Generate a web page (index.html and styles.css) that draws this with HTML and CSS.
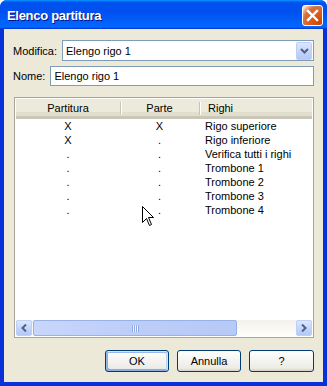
FILE: index.html
```html
<!DOCTYPE html>
<html>
<head>
<meta charset="utf-8">
<link rel="stylesheet" href="styles.css">
</head>
<body>
<div class="window">
  <div class="titlebar">
    <span class="title">Elenco partitura</span>
    <span class="close">
      <svg width="13" height="13" viewBox="0 0 13 13"><path d="M2 2 L11 11 M11 2 L2 11" stroke="#fff" stroke-width="2.4" stroke-linecap="square"/></svg>
    </span>
  </div>
  <div class="client">
    <div class="field">
      <span class="lbl">Modifica:</span>
      <div class="combo">
        <span class="val">Elengo rigo 1</span>
        <span class="dd"><svg width="9" height="6" viewBox="0 0 9 6"><path d="M1 1 L4.5 4.5 L8 1" fill="none" stroke="#4d6185" stroke-width="2"/></svg></span>
      </div>
    </div>
    <div class="field f2">
      <span class="lbl">Nome:</span>
      <div class="textbox">Elengo rigo 1</div>
    </div>
    <div class="list">
      <div class="header">
        <div class="hc c1">Partitura</div>
        <div class="hc c2"><span class="sep"></span>Parte</div>
        <div class="hc c3"><span class="sep"></span>Righi</div>
      </div>
      <div class="rows">
        <div class="row"><span class="c1">X</span><span class="c2">X</span><span class="c3">Rigo superiore</span></div>
        <div class="row"><span class="c1">X</span><span class="c2">.</span><span class="c3">Rigo inferiore</span></div>
        <div class="row"><span class="c1">.</span><span class="c2">.</span><span class="c3">Verifica tutti i righi</span></div>
        <div class="row"><span class="c1">.</span><span class="c2">.</span><span class="c3">Trombone 1</span></div>
        <div class="row"><span class="c1">.</span><span class="c2">.</span><span class="c3">Trombone 2</span></div>
        <div class="row"><span class="c1">.</span><span class="c2">.</span><span class="c3">Trombone 3</span></div>
        <div class="row"><span class="c1">.</span><span class="c2">.</span><span class="c3">Trombone 4</span></div>
      </div>
      <div class="hscroll">
        <span class="sbtn"><svg width="6" height="8" viewBox="0 0 6 8"><path d="M5 0.5 L1.5 4 L5 7.5" fill="none" stroke="#4d6185" stroke-width="2"/></svg></span>
        <div class="track">
          <div class="thumb"><span class="grip"></span></div>
        </div>
        <span class="sbtn"><svg width="6" height="8" viewBox="0 0 6 8"><path d="M1 0.5 L4.5 4 L1 7.5" fill="none" stroke="#4d6185" stroke-width="2"/></svg></span>
      </div>
    </div>
    <div class="buttons">
      <button class="btn default">OK</button>
      <button class="btn">Annulla</button>
      <button class="btn wide">?</button>
    </div>
  </div>
  <svg class="cursor" width="13" height="21" viewBox="0 0 13 21"><path d="M0.5 0.5 L0.5 16.5 L4.5 12.5 L7.5 19.5 L9.5 18.5 L6.5 11.5 L11.5 11.5 Z" fill="#fff" stroke="#000" stroke-width="1"/></svg>
</div>
</body>
</html>
```

FILE: styles.css
```css
html, body {
  margin: 0;
  padding: 0;
  background: #fff;
}
.window {
  position: relative;
  width: 327px;
  height: 386px;
  display: flex;
  flex-direction: column;
  font-family: "Liberation Sans", Arial, sans-serif;
  font-size: 11px;
  color: #000;
  border-radius: 7px 7px 0 0;
  overflow: hidden;
  background: #0831d9;
}
.titlebar {
  height: 29px;
  flex: none;
  display: flex;
  align-items: center;
  justify-content: space-between;
  padding: 0 4px 0 7px;
  background: linear-gradient(180deg, #0997ff, #0053ee 8%, #0050ee 40%, #0066ff 88%, #0066ff 93%, #005bff 95%, #003dd7 96%, #003dd7);
}
.title {
  color: #fff;
  font-weight: bold;
  font-size: 13px;
  letter-spacing: -0.3px;
  text-shadow: 1px 1px #0f1089;
  margin-top: 1px;
}
.close {
  width: 19px;
  height: 19px;
  border: 1px solid #fff;
  border-radius: 3px;
  display: flex;
  align-items: center;
  justify-content: center;
  background: radial-gradient(circle at 90% 90%, #cc4600 0, #dc6527 55%, #cd7546 70%, #ffccb2 90%, #fff 100%);
  margin-top: 2px;
}
.client {
  flex: 1;
  margin: 0 4px 4px 4px;
  background: #ece9d8;
  padding: 11px 9px 10px 9px;
  display: flex;
  flex-direction: column;
}
.field {
  display: flex;
  align-items: center;
  gap: 5px;
  height: 21px;
}
.field.f2 {
  margin-top: 5px;
  height: 20px;
}
.lbl {
  flex: none;
}
.combo {
  flex: 1;
  height: 21px;
  box-sizing: border-box;
  border: 1px solid #7f9db9;
  background: #fff;
  display: flex;
  align-items: center;
}
.combo .val {
  flex: 1;
  padding-left: 3px;
}
.dd {
  width: 16px;
  height: 18px;
  margin-right: 1px;
  box-sizing: border-box;
  border: 1px solid #bbcff8;
  border-radius: 2px;
  background: linear-gradient(180deg, #dde7fe, #c1d3fb 60%, #b4c8f7);
  display: flex;
  align-items: center;
  justify-content: center;
}
.textbox {
  flex: 1;
  height: 20px;
  box-sizing: border-box;
  border: 1px solid #7f9db9;
  background: #fff;
  padding-left: 3px;
  line-height: 18px;
}
.list {
  margin: 11px 0 0 1px;
  height: 241px;
  box-sizing: border-box;
  border: 1px solid #a7a69a;
  padding: 1px;
  background: #fff;
  display: flex;
  flex-direction: column;
}
.header {
  height: 20px;
  flex: none;
  box-sizing: border-box;
  display: flex;
  background: #ebeadb;
  border-bottom: 3px solid #cbc7b8;
  box-shadow: inset 0 -4px 0 #e2decd;
}
.hc {
  position: relative;
  display: flex;
  align-items: center;
  height: 17px;
}
.c1 { width: 104px; justify-content: center; text-align: center; }
.c2 { width: 79px; justify-content: center; text-align: center; }
.c3 { flex: 1; }
.hc.c3 { padding-left: 9px; }
.sep {
  position: absolute;
  left: 0;
  top: 3px;
  width: 1px;
  height: 13px;
  background: #c7c5b2;
  border-right: 1px solid #fff;
}
.rows {
  flex: 1;
}
.row {
  display: flex;
  height: 14px;
  line-height: 14px;
}
.row span {
  display: block;
}
.row .c3 {
  padding-left: 6px;
}
.hscroll {
  height: 16px;
  flex: none;
  display: flex;
  background: linear-gradient(180deg, #f3f1ec, #fefefb);
}
.sbtn {
  width: 16px;
  height: 16px;
  box-sizing: border-box;
  border: 1px solid #bbcff8;
  border-radius: 2px;
  background: linear-gradient(180deg, #dde7fe, #c1d3fb 60%, #b4c8f7);
  display: flex;
  align-items: center;
  justify-content: center;
}
.track {
  flex: 1;
  display: flex;
  padding-left: 1px;
}
.thumb {
  width: 204px;
  height: 16px;
  box-sizing: border-box;
  border: 1px solid #98b1e6;
  border-radius: 2px;
  background: linear-gradient(90deg, #c8d6fb, #bccdf8 50%, #b6c9f7);
  display: flex;
  align-items: center;
  justify-content: center;
}
.grip {
  width: 7px;
  height: 7px;
  background: repeating-linear-gradient(90deg, #8faae6 0, #8faae6 1px, #eef3fe 1px, #eef3fe 2px);
}
.buttons {
  margin-top: 12px;
  display: flex;
  justify-content: flex-end;
  gap: 8px;
  height: 22px;
}
.btn {
  width: 64px;
  height: 22px;
  box-sizing: border-box;
  border: 1px solid #003c74;
  border-radius: 3px;
  background: linear-gradient(180deg, #fff, #ecebe6 86%, #d6d0c5);
  font-family: "Liberation Sans", Arial, sans-serif;
  font-size: 11px;
  color: #000;
  padding: 0;
}
.btn.wide {
  width: 65px;
}
.btn.default {
  box-shadow: inset -1px 1px #cee7ff, inset 1px 2px #98b8ea, inset -2px 2px #bcd4f6, inset 1px -1px #89ade4, inset 2px -2px #89ade4;
}
.cursor {
  position: absolute;
  left: 142px;
  top: 206px;
}
```
